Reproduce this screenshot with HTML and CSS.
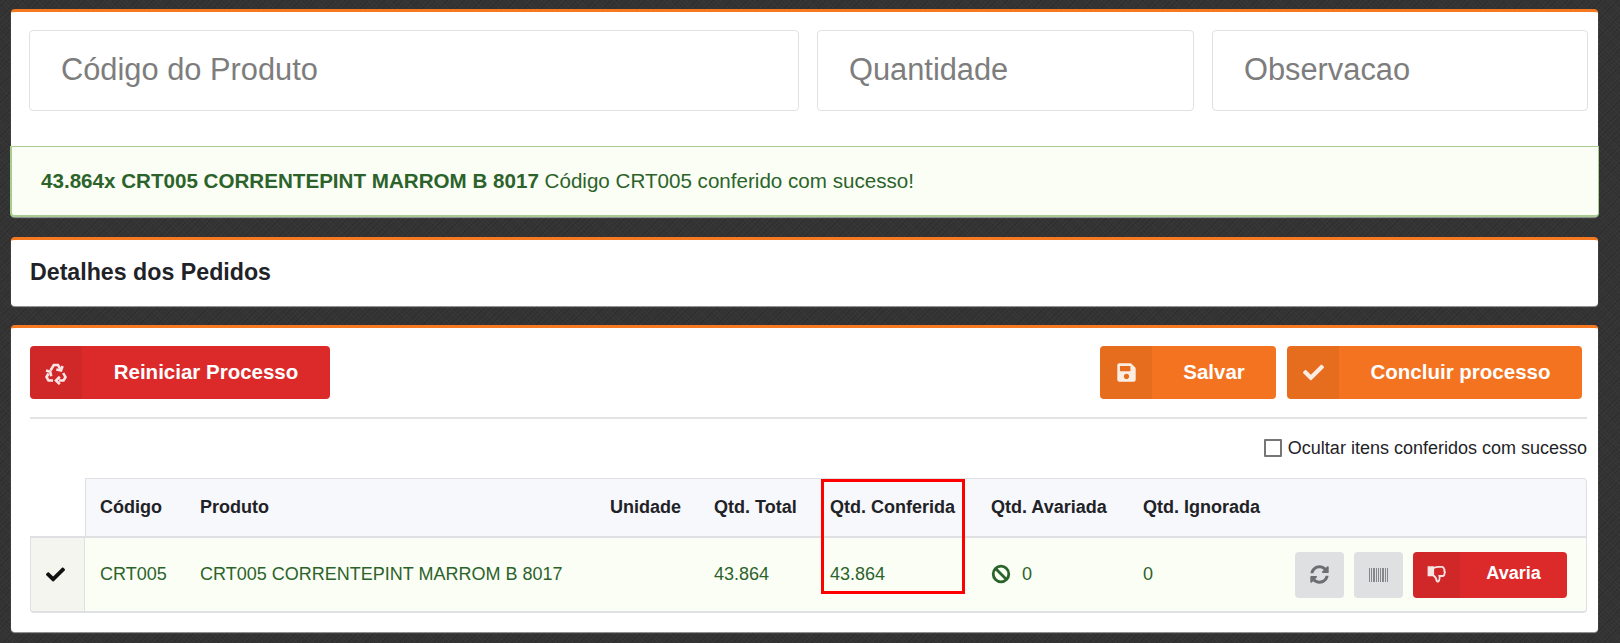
FILE: index.html
```html
<!DOCTYPE html>
<html lang="pt-BR">
<head>
<meta charset="utf-8">
<title>Conferência</title>
<link rel="stylesheet" href="styles.css">
</head>
<body>
<section class="card card-form">
  <form class="fields">
    <input class="field field-main" placeholder="Código do Produto">
    <input class="field" placeholder="Quantidade">
    <input class="field" placeholder="Observacao">
  </form>
  <div class="alert"><p class="alert-text"><strong>43.864x CRT005 CORRENTEPINT MARROM B 8017</strong> Código CRT005 conferido com sucesso!</p></div>
</section>
<section class="card card-title"><h2>Detalhes dos Pedidos</h2></section>
<section class="card card-main">
  <div class="toolbar">
    <button class="btn btn-red btn-restart" type="button"><span class="btn-ico"><svg class="ico-recycle" viewBox="0 0 24 24"><path d="M6.500 9.500 9.800 4H14l2.500 4.400"/><path d="M18.600 5 17 9.500l-4.700-1"/><path d="M19.200 12l2.300 4.200-2 3.300H15"/><path d="M15.800 15.800 12 19.500l3.800 3.700"/><path d="M9 19.500H4.500l-2-3.500 2-3.500"/><path d="M2 9.500l4.200 1.200 1 4.500"/></svg></span><span class="btn-label">Reiniciar Processo</span></button>
    <div class="toolbar-right">
      <button class="btn btn-orange btn-save" type="button"><span class="btn-ico"><svg class="ico" viewBox="0 0 448 512"><path d="M433.941 129.941l-83.882-83.882A48 48 0 0 0 316.118 32H48C21.49 32 0 53.49 0 80v352c0 26.51 21.49 48 48 48h352c26.51 0 48-21.49 48-48V163.882a48 48 0 0 0-14.059-33.941zM224 416c-35.346 0-64-28.654-64-64 0-35.346 28.654-64 64-64s64 28.654 64 64c0 35.346-28.654 64-64 64zm96-304.52V212c0 6.627-5.373 12-12 12H76c-6.627 0-12-5.373-12-12V108c0-6.627 5.373-12 12-12h228.52c3.183 0 6.235 1.264 8.485 3.515l3.48 3.48A11.996 11.996 0 0 1 320 111.48z"/></svg></span><span class="btn-label">Salvar</span></button>
      <button class="btn btn-orange btn-finish" type="button"><span class="btn-ico"><svg class="ico" viewBox="0 0 512 512"><path d="M173.898 439.404l-166.4-166.4c-9.997-9.997-9.997-26.206 0-36.204l36.203-36.204c9.997-9.998 26.207-9.998 36.204 0L192 312.69 432.095 72.596c9.997-9.997 26.207-9.997 36.204 0l36.203 36.204c9.997 9.997 9.997 26.206 0 36.204l-294.4 294.401c-9.998 9.997-26.207 9.997-36.204-.001z"/></svg></span><span class="btn-label">Concluir processo</span></button>
    </div>
  </div>
  <label class="hide-row"><span class="checkbox"></span>Ocultar itens conferidos com sucesso</label>
  <div class="table-wrap">
    <table class="items">
      <colgroup><col class="c0"><col class="c1"><col class="c2"><col class="c3"><col class="c4"><col class="c5"><col class="c6"><col class="c7"><col></colgroup>
      <thead>
        <tr><th class="blank"></th><th class="first">Código</th><th>Produto</th><th>Unidade</th><th>Qtd. Total</th><th>Qtd. Conferida</th><th>Qtd. Avariada</th><th>Qtd. Ignorada</th><th class="last"></th></tr>
      </thead>
      <tbody>
        <tr>
          <td class="status"><svg class="ico-check" viewBox="0 0 512 512"><path d="M173.898 439.404l-166.4-166.4c-9.997-9.997-9.997-26.206 0-36.204l36.203-36.204c9.997-9.998 26.207-9.998 36.204 0L192 312.69 432.095 72.596c9.997-9.997 26.207-9.997 36.204 0l36.203 36.204c9.997 9.997 9.997 26.206 0 36.204l-294.4 294.401c-9.998 9.997-26.207 9.997-36.204-.001z"/></svg></td>
          <td>CRT005</td>
          <td>CRT005 CORRENTEPINT MARROM B 8017</td>
          <td></td>
          <td>43.864</td>
          <td>43.864</td>
          <td><span class="damaged"><svg class="ico-ban" viewBox="0 0 20 20"><circle cx="10" cy="10" r="7.800"/><path d="M4.600 4.600 15.400 15.400"/></svg><span>0</span></span></td>
          <td>0</td>
          <td class="actions">
            <div class="action-row">
              <button class="btn-gray" type="button"><svg class="ico-sync" viewBox="0 0 512 512"><path d="M370.72 133.28C339.458 104.008 298.888 87.962 255.848 88c-77.458.068-144.328 53.178-162.791 126.85-1.344 5.363-6.122 9.15-11.651 9.15H24.103c-7.498 0-13.194-6.807-11.807-14.176C33.933 94.924 134.813 8 256 8c66.448 0 126.791 26.136 171.315 68.685L463.03 40.97C478.149 25.851 504 36.559 504 57.941V192c0 13.255-10.745 24-24 24H345.941c-21.382 0-32.09-25.851-16.971-40.971l41.75-41.749zM32 296h134.059c21.382 0 32.09 25.851 16.971 40.971l-41.75 41.75c31.262 29.273 71.835 45.319 114.876 45.28 77.418-.07 144.315-53.144 162.787-126.849 1.344-5.363 6.122-9.15 11.651-9.15h57.304c7.498 0 13.194 6.807 11.807 14.176C478.067 417.076 377.187 504 256 504c-66.448 0-126.791-26.136-171.315-68.685L48.97 471.03C33.851 486.149 8 475.441 8 454.059V320c0-13.255 10.745-24 24-24z"/></svg></button>
              <button class="btn-gray" type="button"><svg class="ico-bar" viewBox="0 0 19 14"><path d="M0 0h1v14H0zM2 0h1v14H2zM4 0h2v14H4zM7 0h1v14H7zM9 0h1v14H9zM11 0h1v14h-1zM13 0h2v14h-2zM16 0h1v14h-1zM18 0h1v14h-1z"/></svg></button>
              <button class="btn btn-red btn-damage" type="button"><span class="btn-ico"><svg class="ico-thumb" viewBox="0 0 20 20"><path class="thumb-cuff" d="M1.500 2.200h4.700v8.200H1.500z"/><path d="M6.200 3.100c2-.7 3.600-1.200 5.200-1.200h3.400c1.200 0 1.900.7 1.900 1.700.9.600 1 1.700.6 2.400.8.700.8 1.900.1 2.500.3 1.500-.6 2.500-2 2.500h-3c.4 1.600.5 3-.2 4.300-.6 1.200-2 1.800-2.300 1-.3-2.600-1.800-4.800-3.700-6.100"/></svg></span><span class="btn-label">Avaria</span></button>
            </div>
          </td>
        </tr>
      </tbody>
    </table>
    <div class="highlight"></div>
  </div>
</section>
</body>
</html>
```

FILE: styles.css
```css
* { box-sizing: border-box; }
html, body { margin: 0; height: 100%; }
body {
  padding: 9px 22px 0 11px;
  height: 643px;
  overflow: hidden;
  font-family: "Liberation Sans", Arial, sans-serif;
  color: #212529;
  background-color: #333333;
  background-image: repeating-linear-gradient(135deg, rgba(0,0,0,.09) 0 1px, transparent 1px 4px), repeating-linear-gradient(45deg, rgba(255,255,255,.025) 0 1px, transparent 1px 3px);
}
.card {
  background: #fff;
  border-top: 3px solid #f47920;
  border-radius: 4px;
  box-shadow: 0 1px 1px rgba(255,255,255,.5);
}
.card-form { height: 208px; display: flex; flex-direction: column; margin-bottom: 20px; }
.fields { display: flex; gap: 18px; padding: 18px 11px 0 18px; height: 134px; }
.field {
  height: 81px;
  flex: 0 0 377px;
  min-width: 0;
  padding: 0 31px 2px;
  font: 30.8px "Liberation Sans", Arial, sans-serif;
  color: #495057;
  border: 1px solid #dfe1e4;
  border-radius: 4px;
  background: #fff;
  outline: none;
}
.field + .field + .field { flex-basis: 376px; }
.field-main { flex: 0 0 770px; }
.field::placeholder { color: #7d7d7d; opacity: 1; }
.alert {
  flex: 1;
  display: flex;
  align-items: center;
  margin: 0 -1px;
  padding: 0 29px;
  color: #2b632b;
  background: #fbfef5;
  border: 1px solid #a8cb92;
  border-width: 1px 1px 2px 2px;
  border-radius: 0 0 4px 4px;
}
.alert-text { margin: 0; font-size: 20.6px; }
.card-title { height: 69px; margin-bottom: 19px; padding: 19px 19px 0; }
.card-title h2 { margin: 0; font-size: 23.2px; line-height: 27px; font-weight: 700; color: #1f2327; }
.card-main { height: 307px; padding: 18px 11px 0 19px; }
.toolbar { display: flex; justify-content: space-between; padding-bottom: 18px; border-bottom: 2px solid #e2e3e5; }
.toolbar-right { display: flex; gap: 11px; margin-right: 5px; }
.btn {
  display: flex;
  align-items: stretch;
  height: 53px;
  padding: 0;
  border: 0;
  border-radius: 4px;
  overflow: hidden;
  color: #fff;
  font: 700 20.5px "Liberation Sans", Arial, sans-serif;
}
.btn-ico { flex: 0 0 52px; display: flex; align-items: center; justify-content: center; background: rgba(0,0,0,.05); }
.btn-label { flex: 1; display: flex; align-items: center; justify-content: center; padding-bottom: 2px; }
.btn-red { background: #dc2a2b; }
.btn-orange { background: #f47320; }
.btn-restart { width: 300px; }
.btn-save { width: 176px; }
.btn-finish { width: 295px; }
.ico { width: 21px; height: 21px; fill: #fff; opacity: .88; }
.ico-recycle { width: 24px; height: 24px; fill: none; stroke: #fff; stroke-width: 2.6; opacity: .88; }
.hide-row { display: flex; justify-content: flex-end; align-items: center; height: 18px; margin-top: 20px; margin-bottom: 21px; font-size: 18px; color: #1f2327; }
.checkbox { width: 18px; height: 18px; margin-right: 6px; border: 2px solid #767676; border-radius: 1px; background: #fff; }
.table-wrap { position: relative; }
.items { width: 100%; table-layout: fixed; border-collapse: separate; border-spacing: 0; font-size: 18px; }
.c0 { width: 55px; } .c1 { width: 100px; } .c2 { width: 410px; } .c3 { width: 104px; }
.c4 { width: 116px; } .c5 { width: 161px; } .c6 { width: 152px; } .c7 { width: 130px; }
.items th {
  height: 60px;
  padding: 0 15px;
  text-align: left;
  font-weight: 700;
  white-space: nowrap;
  color: #1f2327;
  background: #f7f8fb;
  border-top: 1px solid #dee0e3;
  border-bottom: 2px solid #dee0e3;
}
.items th.first { padding-left: 14px; }
.items th.blank { background: #fff; border: 0; border-bottom: 2px solid #dee0e3; }
.items th.first { border-left: 1px solid #dee0e3; }
.items th.last { border-right: 1px solid #dee0e3; border-top-right-radius: 4px; }
.items td {
  height: 75px;
  padding: 0 15px;
  color: #2b632b;
  background: #fbfef5;
  white-space: nowrap;
  border-bottom: 2px solid #dee0e3;
}
.items td.status { text-align: center; background: #f3f5ee; border-left: 1px solid #dee0e3; border-right: 1px solid #dee0e3; border-bottom-left-radius: 4px; padding: 0 4px 0 0; }
.items td.actions { border-right: 1px solid #dee0e3; border-bottom-right-radius: 4px; padding: 0; }
.ico-check { width: 19px; height: 19px; fill: #111; display: block; margin: 0 auto; }
.damaged { display: flex; align-items: center; gap: 11px; }
.ico-ban { width: 20px; height: 20px; margin-top: -1px; fill: none; stroke: #2b632b; stroke-width: 2.8; }
.action-row { display: flex; justify-content: flex-end; gap: 10px; padding-right: 19px; }
.btn-gray { width: 49px; height: 46px; padding: 0; border: 0; border-radius: 4px; background: #dfe0e2; display: flex; align-items: center; justify-content: center; }
.ico-sync { width: 19px; height: 19px; fill: #6c6f72; }
.ico-bar { width: 19px; height: 14px; fill: #85888a; }
.btn-damage { width: 154px; height: 46px; font-size: 18px; }
.btn-damage .btn-ico { flex: 0 0 47px; }
.ico-thumb { width: 20px; height: 20px; fill: none; stroke: #fff; stroke-width: 1.8; opacity: .88; }
.thumb-cuff { fill: #fff; }
.highlight { position: absolute; left: 791px; top: 1px; width: 144px; height: 115px; border: 3px solid #f00; }
```
